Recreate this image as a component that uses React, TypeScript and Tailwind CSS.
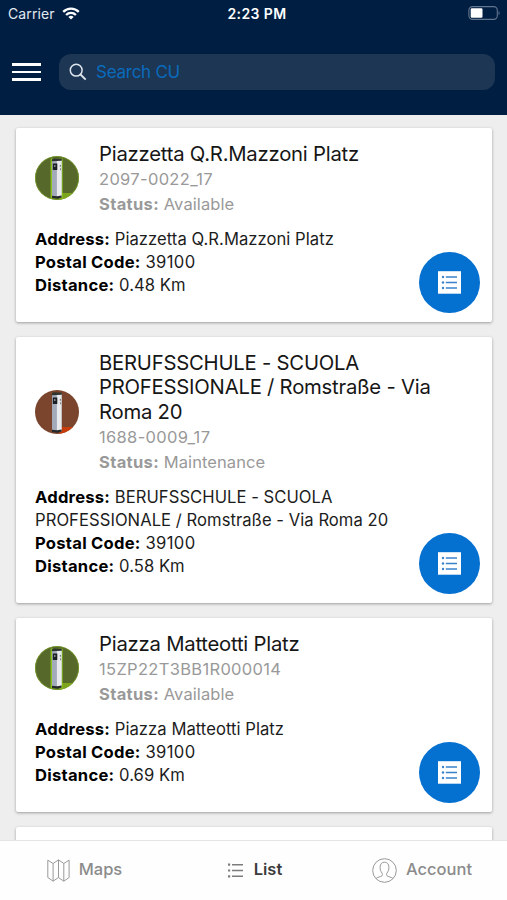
import { clsx } from 'clsx';

type Status = 'Available' | 'Maintenance';

interface Station {
  name: string;
  code: string;
  status: Status;
  postalCode: string;
  distance: string;
}

const stations: Station[] = [
  {
    name: 'Piazzetta Q.R.Mazzoni Platz',
    code: '2097-0022_17',
    status: 'Available',
    postalCode: '39100',
    distance: '0.48 Km',
  },
  {
    name: 'BERUFSSCHULE - SCUOLA PROFESSIONALE / Romstraße - Via Roma 20',
    code: '1688-0009_17',
    status: 'Maintenance',
    postalCode: '39100',
    distance: '0.58 Km',
  },
  {
    name: 'Piazza Matteotti Platz',
    code: '15ZP22T3BB1R000014',
    status: 'Available',
    postalCode: '39100',
    distance: '0.69 Km',
  },
];

const StatusBar = () => (
  <div className="grid h-7 grid-cols-3 items-center pr-[7px] pl-2 text-[14px] text-white">
    <div className="-mt-px flex items-center gap-[7px]">
      <span className="tracking-[0.1px] text-[#e3e9f1]">Carrier</span>
      <svg className="h-[13px] w-[18px]" viewBox="0 0 18 13" fill="none" stroke="#fff" strokeWidth="2.3">
        <path d="M1.2 4.9a11 11 0 0 1 15.6 0" />
        <path d="M4.1 8a6.9 6.9 0 0 1 9.8 0" />
        <path d="M9 12.6 6.4 10a3.7 3.7 0 0 1 5.2 0z" fill="#fff" stroke="none" />
      </svg>
    </div>
    <span className="-mt-px pl-[6px] text-center font-semibold tracking-[0.4px]">2:23 PM</span>
    <svg className="-mt-px h-[15px] w-8 justify-self-end" viewBox="0 0 32 15" fill="none">
      <rect x="0.9" y="0.6" width="28.4" height="12.8" rx="3.6" stroke="#62758e" strokeWidth="1.1" />
      <rect x="2.7" y="2.2" width="11.8" height="9.6" rx="1.2" fill="#fff" />
      <path d="M30.6 5c1.4.7 1.4 3.5 0 4.2z" fill="#62758e" />
    </svg>
  </div>
);

const Header = () => (
  <header className="h-[115px] shrink-0 bg-[#001e42]">
    <StatusBar />
    <div className="flex items-center gap-[18px] px-3 pt-[26px]">
      <button className="flex w-[29px] flex-col gap-[5px]" aria-label="Menu">
        <span className="h-[2.5px] w-full bg-white" />
        <span className="h-[2.5px] w-full bg-white" />
        <span className="h-[2.5px] w-full bg-white" />
      </button>
      <div className="flex h-9 flex-1 items-center gap-[9px] rounded-xl bg-[#1c3654] pl-2.5">
        <svg className="h-[18px] w-[18px]" viewBox="0 0 18 18" fill="none" stroke="#dfe5ec">
          <circle cx="7.2" cy="7.2" r="5.9" strokeWidth="1.5" />
          <path d="m11.5 11.5 5.2 5.2" strokeWidth="1.8" />
        </svg>
        <span className="pt-0.5 text-[17px] tracking-[-0.25px] text-[#0a6bbd]">Search CU</span>
      </div>
    </div>
  </header>
);

const StationAvatar = ({ status }: { status: Status }) => {
  const available = status === 'Available';
  return (
    <svg className="mb-px h-11 w-11 shrink-0 rounded-full" viewBox="0 0 44 44">
      <rect width="44" height="44" fill={available ? '#56682a' : '#7a452c'} />
      <path d="M26 37h18v7H24z" fill={available ? '#7da51b' : '#c83c0c'} />
      {available && <path d="M15.6 2.5h12v40h-12z" fill="#8bc41a" />}
      {available && <circle cx="22" cy="22" r="21.6" fill="none" stroke="#7fae20" strokeWidth="0.7" />}
      <path d="M17 3.5h9.5v38H17z" fill="#b9bfc9" />
      <path d="M21.8 4h4.8v36.5l-4.8 1z" fill="#e8eaee" />
      <path d="M17 5h4.8v36H17z" fill="#a3abba" />
      <path d="m16.8 3.4 2-1.2 8 .6v2l-10 .5z" fill="#30342f" />
      <path d="M17.8 7.5h4.5V14h-4.5z" fill="#1c2024" />
      <path d="M19 9h1.5v1.9H19z" fill="#7c858d" />
      <path d="M24.8 9.3H26v1.3h-1.2zM25 12.3h.7v2H25z" fill="#55595e" />
      <path d="m17 39.8 5 .5 4.6-.9v2L23 42.7l-6-.8z" fill="#262a2b" />
    </svg>
  );
};

const DetailsIcon = () => (
  <svg className="h-[23px] w-[23px]" viewBox="0 0 23 23">
    <rect width="23" height="22.5" y="0.2" fill="#fff" />
    <g fill="#3a82cc">
      <circle cx="5" cy="6" r="1.2" />
      <circle cx="5" cy="11.5" r="1.2" />
      <circle cx="5" cy="17" r="1.2" />
      <path d="M7.8 5.3H19v1.4H7.8zM7.8 10.8H19v1.4H7.8zM7.8 16.3H19v1.4H7.8z" />
    </g>
  </svg>
);

const StationCard = ({ station }: { station: Station }) => (
  <article className="relative shrink-0 rounded-[2px] bg-white pt-3.5 pr-5 pb-[24.5px] pl-[19px] shadow-[0_1px_3px_rgba(0,0,0,0.35)]">
    <div className="flex items-center gap-5">
      <StationAvatar status={station.status} />
      <div className="flex-1 text-[16.5px] leading-[24.4px] text-[#999]">
        <h2 className="text-[20.3px] tracking-[-0.23px] text-[#161616]">{station.name}</h2>
        <div className="-mb-px pt-px">
          <p className="tracking-[0.32px]">{station.code}</p>
          <p className="tracking-[0.08px]">
            <b className="font-bold tracking-[0.35px]">Status:</b> {station.status}
          </p>
        </div>
      </div>
    </div>
    <div className="mt-[12.7px] w-[365px] text-[16.6px] leading-[23.2px] tracking-[0.05px] text-[#1c1c1c]">
      <p>
        <b className="font-bold tracking-[0.22px] text-black">Address:</b> {station.name}
      </p>
      <p>
        <b className="font-bold tracking-[0.25px] text-black">Postal Code:</b>{' '}
        <span className="tracking-[0.4px]">{station.postalCode}</span>
      </p>
      <p>
        <b className="font-bold tracking-[0.25px] text-black">Distance:</b> {station.distance}
      </p>
    </div>
    <button
      className="absolute right-3 bottom-[9px] flex h-[61px] w-[61px] items-center justify-center rounded-full bg-[#0470d0]"
      aria-label="Details"
    >
      <DetailsIcon />
    </button>
  </article>
);

const MapIcon = () => (
  <svg className="h-[23px] w-[23px]" viewBox="0 0 23 23" fill="none" stroke="#999" strokeWidth="1">
    <path d="M.8 1.2 6.1 4.5 11.5.9l5.3 3.6 5.3-3.3v17.3l-5.3 3.7-5.3-3.7-5.4 3.7-5.3-3.7zM6.1 4.5v17.7M11.5.9v17.6M16.8 4.5v17.7" />
  </svg>
);

const ListIcon = () => (
  <svg className="h-[15px] w-[15px]" viewBox="0 0 15 15" fill="#7c7c7c">
    <path d="M0 .6h2.2v2.2H0zM0 6.4h2.2v2.2H0zM0 12.2h2.2v2.2H0zM4 .9h11v1.5H4zM4 6.7h11v1.5H4zM4 12.5h11V14H4z" />
  </svg>
);

const AccountIcon = () => (
  <svg className="h-[25px] w-[25px]" viewBox="0 0 25 25" fill="none" stroke="#999" strokeWidth="1">
    <circle cx="12.5" cy="12.5" r="11.8" />
    <path d="M4 20.5c1.2-1.4 5-1.7 6-2.7.7-.8.4-2.1.1-2.7-1.4-1.5-2-3.6-2-5.8 0-3.3 1.7-5.1 4.4-5.1s4.4 1.8 4.4 5.1c0 2.2-.6 4.3-2 5.8-.3.6-.6 1.9.1 2.7 1 1 4.8 1.3 6 2.7" />
  </svg>
);

const tabs = [
  { label: 'Maps', icon: MapIcon, className: 'gap-[9px]' },
  { label: 'List', icon: ListIcon, className: 'gap-[11px] pl-[3px]' },
  { label: 'Account', icon: AccountIcon, className: 'gap-[9px] pr-px' },
];

const TabBar = ({ active }: { active: string }) => (
  <nav className="grid h-[60px] shrink-0 grid-cols-3 border-t border-[#e4e4e4] bg-[#fefefe]">
    {tabs.map(({ label, icon: Icon, className }) => (
      <button key={label} className={clsx('flex items-center justify-center', className)}>
        <Icon />
        <span
          className={clsx(
            'pb-0.5 text-[16.5px]',
            label === active ? 'font-semibold text-[#3c3c3c]' : 'font-medium text-[#8b8b8b]',
          )}
        >
          {label}
        </span>
      </button>
    ))}
  </nav>
);

export default function App() {
  return (
    <div className="flex h-[900px] w-[507px] flex-col overflow-hidden bg-[#eeeeee] font-['Inter',sans-serif]">
      <Header />
      <main className="flex min-h-0 flex-1 flex-col gap-[15px] overflow-hidden pt-[13px] pr-[15px] pl-4">
        {stations.map((station) => (
          <StationCard key={station.code} station={station} />
        ))}
        <div className="h-10 shrink-0 rounded-[2px] bg-white shadow-[0_1px_3px_rgba(0,0,0,0.35)]" />
      </main>
      <TabBar active="List" />
    </div>
  );
}
